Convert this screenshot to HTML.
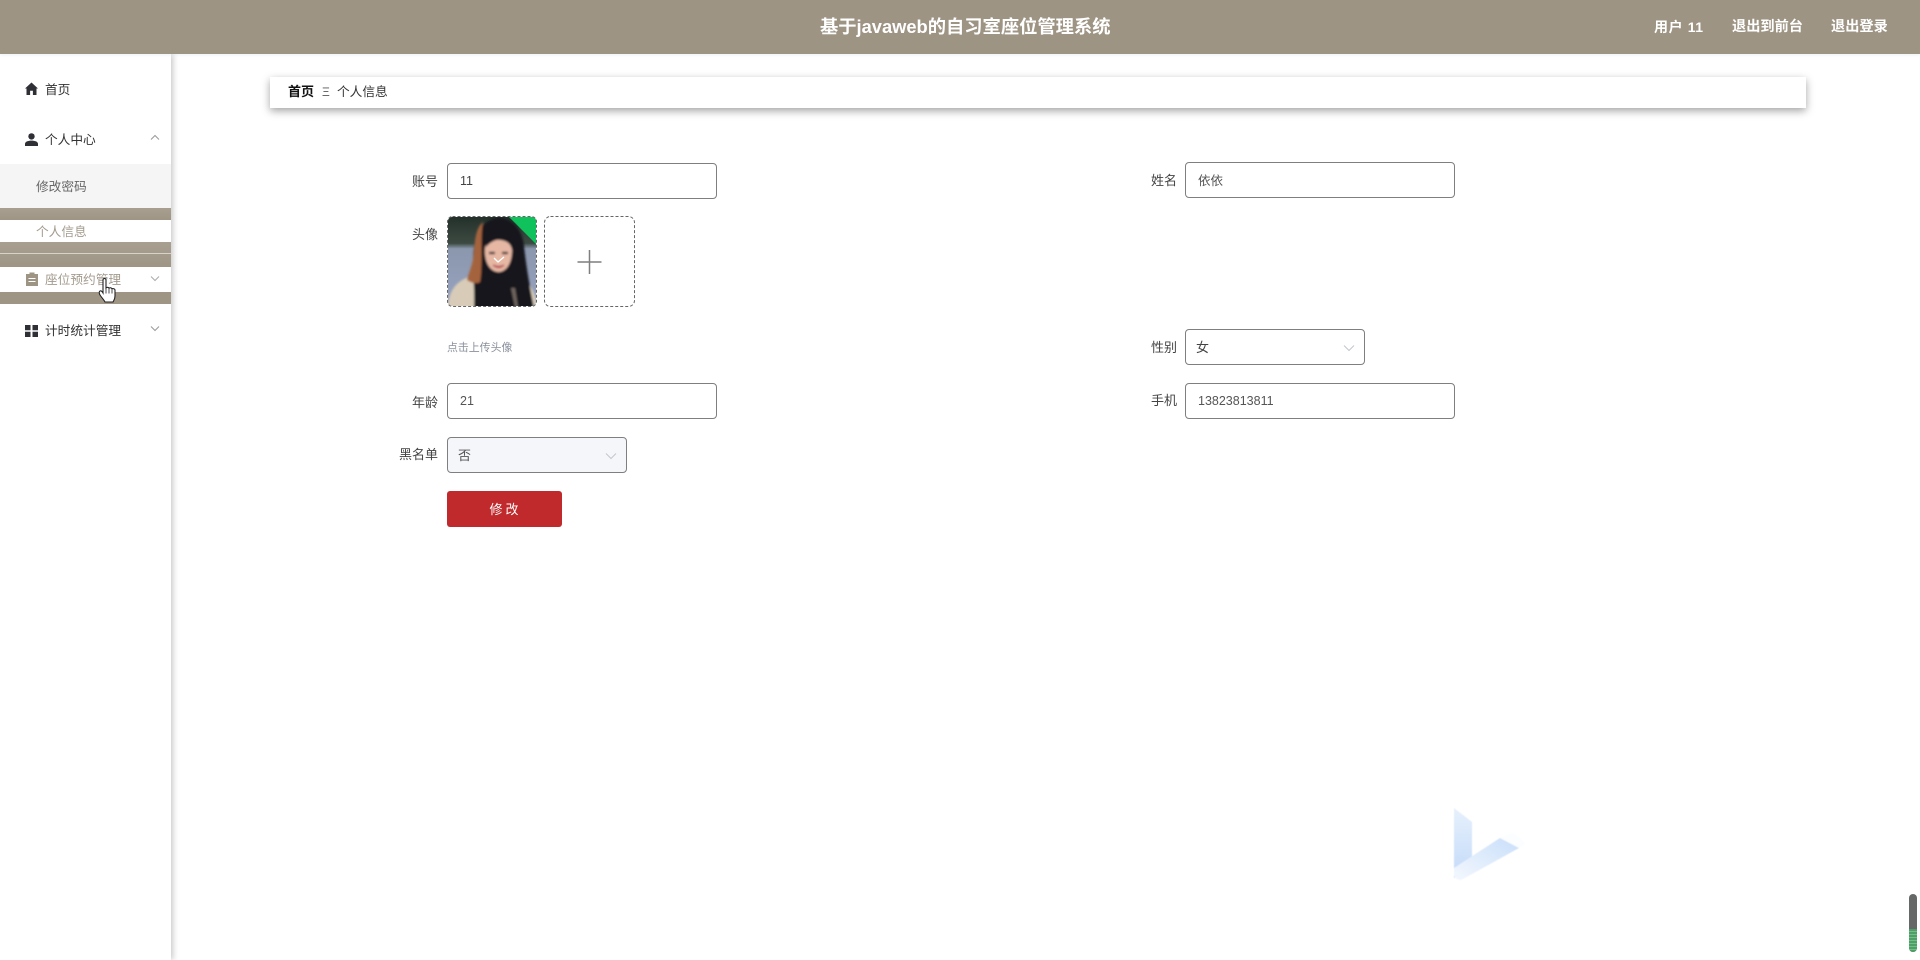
<!DOCTYPE html>
<html lang="zh"><head><meta charset="utf-8"><title>个人信息</title>
<style>
*{box-sizing:border-box}
html,body{margin:0;padding:0;width:1920px;height:960px;overflow:hidden;background:#fff;font-family:"Liberation Sans","Noto Sans CJK SC",sans-serif;color:#333}
.a{position:absolute;white-space:nowrap;line-height:20px}
.hd{position:absolute;left:0;top:0;width:1920px;height:54px;background:#9e9484;z-index:3;box-shadow:0 1px 3px rgba(120,120,180,.12)}
.w{color:#fff;font-weight:700}
.side{position:absolute;left:0;top:54px;width:171px;height:906px;background:#fff;box-shadow:2px 0 6px rgba(0,0,0,.22)}
.band{position:absolute;left:0;width:171px;background:linear-gradient(#a89f91,#9e9585)}
.m{font-size:12.7px;color:#333}
.lb{font-size:13px;color:#444;text-align:right;width:70px}
.in{position:absolute;border:1px solid #7f7f7f;border-radius:4px;background:#fff;height:36px;font-size:12.5px;line-height:35px;color:#555}
.ar{position:absolute;top:14px;right:9px}
</style></head><body>
<div class="hd"></div>
<div class="a w" style="left:820px;top:17px;font-size:18.3px;z-index:4">基于javaweb的自习室座位管理系统</div>
<div class="a w" style="left:1654px;top:17px;font-size:14px;letter-spacing:.6px;z-index:4">用户 11</div>
<div class="a w" style="left:1732px;top:17px;font-size:14.2px;z-index:4">退出到前台</div>
<div class="a w" style="left:1831px;top:17px;font-size:14.2px;z-index:4">退出登录</div>

<div class="side"></div>
<div style="position:absolute;left:0;top:164px;width:171px;height:44px;background:#f5f5f5"></div>
<div class="band" style="top:208px;height:12px"></div>
<div class="band" style="top:242px;height:25px"></div>
<div style="position:absolute;left:0;top:253px;width:171px;height:1px;background:#d9d2c6"></div>
<div class="band" style="top:292px;height:12px;background:#9e9585"></div>

<svg class="a" style="left:25px;top:82px" width="13" height="13" viewBox="0 0 13 13"><path d="M6.5 .5 0 6.5h1.5V13h3.6V8.800h2.800V13h3.600V6.500H13z" fill="#2f2f36"/></svg>
<div class="a m" style="left:45px;top:80px">首页</div>
<svg class="a" style="left:25px;top:133px" width="13" height="13" viewBox="0 0 13 13"><circle cx="6.5" cy="3.4" r="3.2" fill="#2f2f36"/><path d="M0 13v-2.200C0 8.700 3 7.600 6.500 7.600S13 8.700 13 10.800V13z" fill="#2f2f36"/></svg>
<div class="a m" style="left:45px;top:130px">个人中心</div>
<svg class="a" style="left:150px;top:134px" width="10" height="7" viewBox="0 0 10 7"><path d="M1 5.500 5 1.500l4 4" fill="none" stroke="#999" stroke-width="1"/></svg>
<div class="a m" style="left:36px;top:177px;color:#666">修改密码</div>
<div class="a m" style="left:36px;top:222px;color:#a39b8e">个人信息</div>
<svg class="a" style="left:26px;top:272px" width="12" height="14" viewBox="0 0 12 14"><path d="M0 2h3.500V.5h5V2H12v12H0zM2.500 6v1h7V6zm0 3v1h7V9z" fill="#9e9484" fill-rule="evenodd"/></svg>
<div class="a m" style="left:45px;top:270px;color:#a39b8e">座位预约管理</div>
<svg class="a" style="left:150px;top:275px" width="10" height="7" viewBox="0 0 10 7"><path d="M1 1.500l4 4 4-4" fill="none" stroke="#aaa" stroke-width="1"/></svg>
<svg class="a" style="left:25px;top:325px" width="13" height="12" viewBox="0 0 13 12"><path d="M0 0h5.500v5.200H0zM7.500 0H13v5.200H7.500zM0 6.800h5.500V12H0zM7.500 6.800H13V12H7.500z" fill="#2f2f36"/></svg>
<div class="a m" style="left:45px;top:321px">计时统计管理</div>
<svg class="a" style="left:150px;top:325px" width="10" height="7" viewBox="0 0 10 7"><path d="M1 1.500l4 4 4-4" fill="none" stroke="#999" stroke-width="1"/></svg>
<svg class="a" style="left:98px;top:278px;z-index:5" width="19" height="26" viewBox="0 0 19 26"><path d="M5 2c0-2 3-2 3 0v8c1-1 2.500-1 3 .2 1-.8 2.500-.5 3 .6 1-.5 3 0 3 1.500V18c0 3-1 4-2 6H7c-1-2-3-4-5-7-1-2-1-3.500 0-4 1-.5 2 .3 3 2z" fill="#fff" stroke="#222" stroke-width="1.100"/><path d="M8 10.500v5M11 10.500v5M14 11v4.500" stroke="#222" stroke-width=".8" fill="none"/></svg>

<div style="position:absolute;left:270px;top:77px;width:1536px;height:31px;background:#fff;box-shadow:0 3px 8px rgba(0,0,0,.36)"></div>
<div class="a" style="left:288px;top:82px;font-size:13px;font-weight:700;color:#111">首页</div>
<div class="a" style="left:322px;top:82px;font-size:12px;color:#555">Ξ</div>
<div class="a" style="left:337px;top:82px;font-size:12.7px;color:#333">个人信息</div>

<div class="a lb" style="left:368px;top:172px">账号</div>
<div class="in" style="left:447px;top:163px;width:270px;padding-left:12px;color:#444">11</div>
<div class="a lb" style="left:368px;top:225px">头像</div>
<svg style="position:absolute;left:447px;top:216px" width="90" height="91" viewBox="0 0 90 91">
<defs>
<clipPath id="c"><rect x="1" y="1" width="88" height="89" rx="4"/></clipPath>
<linearGradient id="sky" x1="0" y1="0" x2="0" y2="1"><stop offset="0" stop-color="#23302a"/><stop offset=".3" stop-color="#3c4a42"/><stop offset=".36" stop-color="#8b97ad"/><stop offset="1" stop-color="#98a3c0"/></linearGradient>
<filter id="b"><feGaussianBlur stdDeviation="1"/></filter>
</defs>
<g clip-path="url(#c)">
<rect width="90" height="91" fill="url(#sky)"/>
<path d="M62 1h28v28z" fill="#0fc25c"/>
<g filter="url(#b)">
<path d="M1 92c0-16 8-28 24-32l45 0c12 4 19 16 20 32z" fill="#d8ccb8"/>
<path d="M27 92c1-22-3-50 1-66C31 10 42 2 52 2c14 0 23 12 25 28 2 20 6 42 10 62z" fill="#17151a"/>
<path d="M36 6C30 11 28 20 27 36c-1 12-5 20-7 28 4 3 10 4 13 2 3-16 0-46 3-60z" fill="#a5643c"/>
<path d="M38 32c1-5 4-8 13-8 9 0 13 4 14 10 0 11-4 21-13 22-9 0-15-10-14-24z" fill="#e6b8a4"/>
<path d="M39 31c6-7 16-12 26-1-3-10-9-13-15-13-7 1-10 6-11 14z" fill="#17151a"/>
<path d="M42 37h6M55 37h6" stroke="#2a1c1c" stroke-width="2.200"/>
<path d="M46 49q6 3 11 0q-5 5-11 0z" fill="#b4434c" stroke="#b4434c" stroke-width="1.300"/>
<path d="M44 57l15 0 4 34H42z" fill="#17151a"/>
<path d="M64 72l4 19h3l-3-19z" fill="#6f655e"/>
</g>
<path d="M47 42l4 4 6-5" fill="none" stroke="#fff" stroke-width="1.300"/>
</g>
<rect x=".5" y=".5" width="89" height="90" rx="5" fill="none" stroke="#666" stroke-dasharray="3 2"/>
</svg>
<svg style="position:absolute;left:544px;top:216px" width="91" height="91" viewBox="0 0 91 91">
<rect x=".5" y=".5" width="90" height="90" rx="6" fill="#fff" stroke="#666" stroke-dasharray="3 2"/>
<path d="M45.500 34v24M33.500 46h24" stroke="#7f7f7f" stroke-width="1.500" fill="none"/>
</svg>
<div class="a" style="left:447px;top:338px;font-size:10.900px;color:#8a919c">点击上传头像</div>

<div class="a lb" style="left:368px;top:393px">年龄</div>
<div class="in" style="left:447px;top:383px;width:270px;padding-left:12px">21</div>
<div class="a lb" style="left:368px;top:445px">黑名单</div>
<div class="in" style="left:447px;top:437px;width:180px;padding-left:10px;background:#f5f6fa;font-size:13px">否<svg class="ar" width="12" height="8" viewBox="0 0 12 8"><path d="M1 1.500l5 5 5-5" fill="none" stroke="#c4c6cc"/></svg></div>
<div style="position:absolute;left:447px;top:491px;width:115px;height:36px;background:#c02a2c;border-radius:3px;color:#fff;font-size:13px;line-height:38px;text-align:center;letter-spacing:3px;padding-left:2px">修改</div>

<div class="a lb" style="left:1107px;top:171px">姓名</div>
<div class="in" style="left:1185px;top:162px;width:270px;padding-left:12px;line-height:36px">依依</div>
<div class="a lb" style="left:1107px;top:338px">性别</div>
<div class="in" style="left:1185px;top:329px;width:180px;padding-left:10px;font-size:13px;color:#444">女<svg class="ar" width="12" height="8" viewBox="0 0 12 8"><path d="M1 1.500l5 5 5-5" fill="none" stroke="#c4c6cc"/></svg></div>
<div class="a lb" style="left:1107px;top:391px">手机</div>
<div class="in" style="left:1185px;top:383px;width:270px;padding-left:12px">13823813811</div>

<svg style="position:absolute;left:1440px;top:790px" width="100" height="100" viewBox="0 0 100 100">
<defs>
<linearGradient id="l1" x1="0" y1="0" x2="0" y2="1"><stop offset="0" stop-color="#e6f0fc"/><stop offset="1" stop-color="#c3daf9"/></linearGradient>
<linearGradient id="l2" x1="0" y1="1" x2="1" y2="0"><stop offset="0" stop-color="#f4f8fe"/><stop offset="1" stop-color="#c8defa"/></linearGradient>
<filter id="s"><feGaussianBlur stdDeviation=".6"/></filter>
</defs>
<g filter="url(#s)">
<path d="M14 18l18 14v46l-18 10z" fill="url(#l1)"/>
<path d="M14 84c0 5 4 7 9 5l56-31-19-10-46 30z" fill="url(#l2)"/>
<path d="M60 48l19 10 6-4c-2-5-8-9-14-11z" fill="#fbfdff"/>
</g>
</svg>

<div style="position:absolute;left:1909px;top:894px;width:8px;height:58px;border-radius:4px;background:#666767;overflow:hidden">
<div style="position:absolute;left:0;top:35px;width:8px;height:23px;background:repeating-linear-gradient(#4f9e68 0 2px,#6fbf87 2px 3px)"></div>
</div>
</body></html>
